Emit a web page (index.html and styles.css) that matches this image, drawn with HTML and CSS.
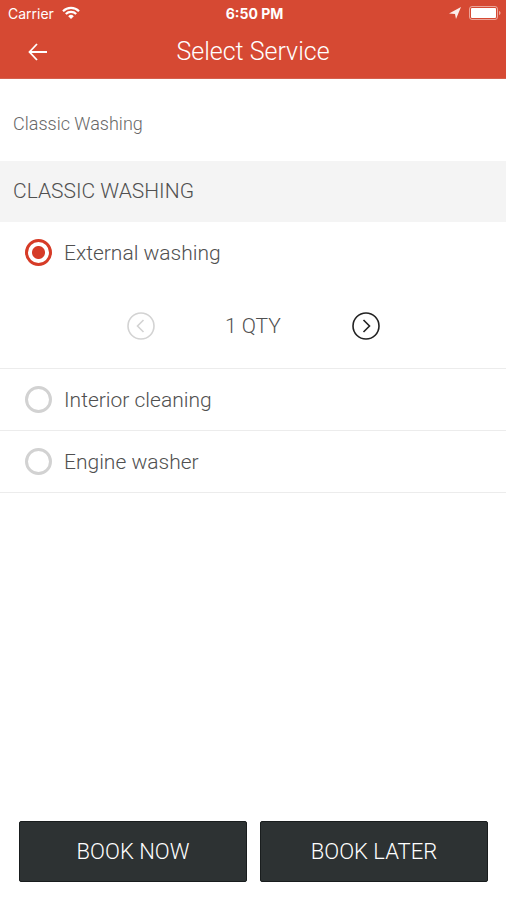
FILE: index.html
```html
<!DOCTYPE html>
<html lang="en">
<head>
<meta charset="utf-8">
<meta name="viewport" content="width=device-width, initial-scale=1">
<title>Select Service</title>
<link rel="stylesheet" href="styles.css">
</head>
<body>
<header class="header">
  <div class="status">
    <div class="carrier">
      <span>Carrier</span>
      <svg class="wifi" width="18" height="14" viewBox="0 0 18 14" aria-hidden="true">
        <path d="M1 5.2a11.4 11.4 0 0 1 16 0M3.8 8a7.4 7.4 0 0 1 10.4 0" fill="none" stroke="currentColor" stroke-width="2.2"/>
        <path d="M9 13L6.2 10.2a4 4 0 0 1 5.6 0z" fill="currentColor"/>
      </svg>
    </div>
    <span class="clock">6:50 PM</span>
    <div class="indicators">
      <svg width="12" height="12" viewBox="0 0 12 12" aria-hidden="true">
        <path d="M0 6.500L12 0 7 12 6 7z" fill="currentColor" fill-opacity=".9"/>
      </svg>
      <svg width="32" height="14" viewBox="0 0 32 14" aria-hidden="true">
        <rect x=".5" y=".5" width="28" height="13" rx="2.5" fill="none" stroke="currentColor" stroke-opacity=".5"/>
        <rect x="2" y="2" width="25" height="10" rx="1" fill="currentColor"/>
        <path d="M30 5c2 .5 2 3.500 0 4z" fill="currentColor" fill-opacity=".5"/>
      </svg>
    </div>
  </div>
  <div class="navbar">
    <button class="icon-button back" type="button" aria-label="Back">
      <svg width="20" height="18" viewBox="0 0 20 18" aria-hidden="true">
        <path d="M9 1L1.500 9 9 17M1.500 9H19" fill="none" stroke="currentColor" stroke-width="1.800"/>
      </svg>
    </button>
    <h1 class="title">Select Service</h1>
  </div>
</header>
<main class="content">
  <p class="category">Classic Washing</p>
  <h2 class="section">CLASSIC WASHING</h2>
  <ul class="services">
    <li class="service">
      <label class="option"><input class="radio" type="radio" name="service" checked><span>External washing</span></label>
      <div class="quantity">
        <button class="icon-button decrease" type="button" aria-label="Decrease quantity" disabled>
          <svg width="28" height="28" viewBox="0 0 28 28" aria-hidden="true">
            <g fill="none" stroke="currentColor" stroke-width="1.600"><circle cx="14" cy="14" r="13"/><path d="M16.500 8L10.500 14l6 6"/></g>
          </svg>
        </button>
        <output class="amount">1 QTY</output>
        <button class="icon-button" type="button" aria-label="Increase quantity">
          <svg width="28" height="28" viewBox="0 0 28 28" aria-hidden="true">
            <g fill="none" stroke="currentColor" stroke-width="1.600"><circle cx="14" cy="14" r="13"/><path d="M11.500 8l6 6-6 6"/></g>
          </svg>
        </button>
      </div>
    </li>
    <li class="service"><label class="option"><input class="radio" type="radio" name="service"><span>Interior cleaning</span></label></li>
    <li class="service"><label class="option"><input class="radio" type="radio" name="service"><span>Engine washer</span></label></li>
  </ul>
</main>
<footer class="actions">
  <button class="book" type="button">BOOK NOW</button>
  <button class="book" type="button">BOOK LATER</button>
</footer>
</body>
</html>
```
FILE: styles.css
```css
* {
  box-sizing: border-box;
}

body {
  margin: 0;
  min-height: 100vh;
  display: flex;
  flex-direction: column;
  background: #fff;
  color: #505050;
  font-family: Roboto, "Liberation Sans", sans-serif;
  font-weight: 300;
}

button {
  font: inherit;
  border: 0;
}

.header {
  background: #d64933;
  color: #fff;
  border-bottom: 1px solid #d5604d;
}

.status {
  display: grid;
  grid-template-columns: 1fr auto 1fr;
  align-items: center;
  height: 26px;
  padding: 0 5px 0 8px;
  font-family: Inter, Roboto, sans-serif;
  font-size: 14px;
  font-weight: 400;
}

.carrier,
.indicators {
  display: flex;
  align-items: center;
  gap: 8px;
}

.indicators {
  justify-content: flex-end;
}

.clock {
  font-weight: 700;
}

.navbar {
  display: grid;
  grid-template-columns: 76px 1fr 76px;
  align-items: center;
  height: 52px;
}

.icon-button {
  display: flex;
  padding: 0;
  background: none;
  color: #222;
}

.back {
  justify-self: center;
  color: #fff;
}

.title {
  margin: 0;
  font-size: 25px;
  font-weight: 300;
  line-height: 50px;
  text-align: center;
}

.content {
  flex: 1;
}

.category {
  margin: 0;
  padding: 8px 13px 0;
  font-size: 18px;
  line-height: 74px;
  color: #686868;
}

.section {
  margin: 0;
  padding: 0 13px;
  background: #f4f4f4;
  font-size: 21px;
  font-weight: 300;
  line-height: 61px;
}

.services {
  margin: 0;
  padding: 0;
  list-style: none;
}

.service {
  border-bottom: 1px solid #ececec;
}

.option {
  display: flex;
  align-items: center;
  gap: 12px;
  height: 61px;
  padding: 0 25px;
  font-size: 21px;
}

.radio {
  appearance: none;
  width: 27px;
  height: 27px;
  margin: 0;
  border: 3px solid #d2d2d2;
  border-radius: 50%;
}

.radio:checked {
  border-color: #d63b27;
  background: radial-gradient(circle, #d63b27 6px, #fff 7px);
}

.quantity {
  display: grid;
  grid-template-columns: 28px 1fr 28px;
  align-items: center;
  height: 85px;
  padding: 0 25%;
  font-size: 21px;
}

.amount {
  text-align: center;
}

.decrease {
  color: #d3d3d3;
}

.actions {
  display: grid;
  grid-template-columns: 1fr 1fr;
  gap: 13px;
  padding: 0 18px 18px 19px;
}

.book {
  height: 61px;
  padding: 0;
  border: 1px solid #191d1e;
  border-radius: 2px;
  background: #2d3233;
  color: #fff;
  font-size: 22px;
}
```
